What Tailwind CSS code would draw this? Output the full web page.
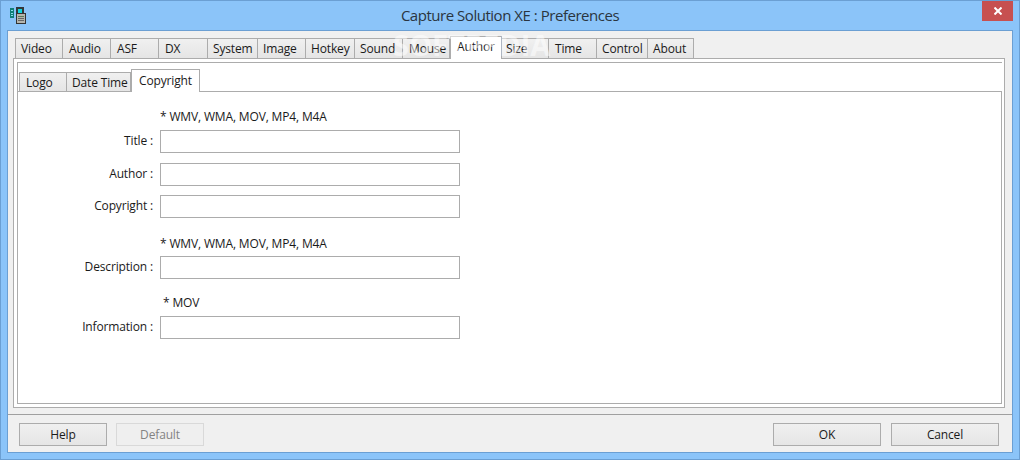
<!DOCTYPE html>
<html><head><meta charset="utf-8"><script src="https://cdn.jsdelivr.net/npm/@tailwindcss/browser@4"></script></head>
<body class="m-0 overflow-hidden">
<div class="w-[1020px] h-[460px] bg-[#8bc4f9] border border-[#6b9fd3] flex flex-col font-['Open_Sans',sans-serif] text-[12px] tracking-[-0.15px] text-[#1a1a1a] leading-none relative overflow-hidden">
  <div class="h-[29px] shrink-0 relative flex items-center justify-center pb-[1px]">
    <svg class="absolute left-[9px] top-[6px]" width="17" height="18" viewBox="0 0 17 18">
      <rect x="0" y="1" width="4" height="10" fill="#0f7f78"/><rect x="1" y="3" width="2" height="1" fill="#8de"/><rect x="1" y="6" width="2" height="1" fill="#8de"/><rect x="1" y="8" width="2" height="1" fill="#8de"/>
      <rect x="6" y="0" width="8" height="7" fill="#33393b"/><rect x="8" y="2" width="4" height="4" fill="#10d5e0"/>
      <rect x="6.5" y="6.5" width="9" height="10" fill="#b5b5ae" stroke="#333"/><rect x="8" y="9" width="6" height="1" fill="#5a7a5a"/><rect x="8" y="11" width="6" height="1" fill="#666"/><rect x="8" y="13" width="6" height="1" fill="#666"/>
    </svg>
    <span class="text-[15px] text-[#2a3540] tracking-[-0.47px]">Capture Solution XE : Preferences</span>
    <div class="absolute left-[981px] top-0 w-[31px] h-[20px] bg-[#c75050] flex items-center justify-center">
      <svg width="8" height="8" viewBox="0 0 8 8"><path d="M0.5 0.5L7.5 7.5M7.5 0.5L0.5 7.5" stroke="#fff" stroke-width="2" fill="none"/></svg>
    </div>
  </div>
  <div class="mx-[6px] h-[423px] shrink-0 border border-[#6b9fd3] bg-[#f0f0f0] flex flex-col relative">
    <div class="pl-[5px] pr-[7px] pt-[7px]">
      <div class="flex h-[20px] ml-[2px] relative z-10 items-end">
        <div class="w-[48px] h-[20px] border border-b-0 border-[#acacac] bg-gradient-to-b from-[#f0f0f0] to-[#e5e5e5] pl-[5px] pt-[4px]">Video</div>
        <div class="w-[48px] h-[20px] border border-b-0 border-l-0 border-[#acacac] bg-gradient-to-b from-[#f0f0f0] to-[#e5e5e5] pl-[6px] pt-[4px]">Audio</div>
        <div class="w-[48px] h-[20px] border border-b-0 border-l-0 border-[#acacac] bg-gradient-to-b from-[#f0f0f0] to-[#e5e5e5] pl-[6px] pt-[4px]">ASF</div>
        <div class="w-[49px] h-[20px] border border-b-0 border-l-0 border-[#acacac] bg-gradient-to-b from-[#f0f0f0] to-[#e5e5e5] pl-[6px] pt-[4px]">DX</div>
        <div class="w-[50px] h-[20px] border border-b-0 border-l-0 border-[#acacac] bg-gradient-to-b from-[#f0f0f0] to-[#e5e5e5] pl-[5px] pt-[4px]">System</div>
        <div class="w-[48px] h-[20px] border border-b-0 border-l-0 border-[#acacac] bg-gradient-to-b from-[#f0f0f0] to-[#e5e5e5] pl-[5px] pt-[4px]">Image</div>
        <div class="w-[49px] h-[20px] border border-b-0 border-l-0 border-[#acacac] bg-gradient-to-b from-[#f0f0f0] to-[#e5e5e5] pl-[5px] pt-[4px]">Hotkey</div>
        <div class="w-[48px] h-[20px] border border-b-0 border-l-0 border-[#acacac] bg-gradient-to-b from-[#f0f0f0] to-[#e5e5e5] pl-[5px] pt-[4px]">Sound</div>
        <div class="w-[47px] h-[20px] border border-b-0 border-l-0 border-[#acacac] bg-gradient-to-b from-[#f0f0f0] to-[#e5e5e5] pl-[6px] pt-[4px]">Mouse</div>
        <div class="w-[52px] h-[23px] border border-b-0 border-[#acacac] bg-white pl-[6px] pt-[4px] relative -mb-[1px]">Author</div>
        <div class="w-[47px] h-[20px] border border-b-0 border-l-0 border-[#acacac] bg-gradient-to-b from-[#f0f0f0] to-[#e5e5e5] pl-[4px] pt-[4px]">Size</div>
        <div class="w-[48px] h-[20px] border border-b-0 border-l-0 border-[#acacac] bg-gradient-to-b from-[#f0f0f0] to-[#e5e5e5] pl-[6px] pt-[4px]">Time</div>
        <div class="w-[51px] h-[20px] border border-b-0 border-l-0 border-[#acacac] bg-gradient-to-b from-[#f0f0f0] to-[#e5e5e5] pl-[5px] pt-[4px]">Control</div>
        <div class="w-[46px] h-[20px] border border-b-0 border-l-0 border-[#acacac] bg-gradient-to-b from-[#f0f0f0] to-[#e5e5e5] pl-[5px] pt-[4px]">About</div>
      </div>
      <div class="h-[350px] border border-[#acacac] bg-white pl-[3px] pr-[2px] pt-[3px]">
        <div class="h-[342px] border-t border-l border-[#acacac] flex flex-col">
          <div class="flex h-[28px] shrink-0 items-end pl-[1px] relative z-10">
            <div class="w-[48px] h-[19px] border border-b-0 border-[#acacac] bg-gradient-to-b from-[#f0f0f0] to-[#e5e5e5] pl-[6px] pt-[4px]">Logo</div>
            <div class="w-[64px] h-[19px] border border-b-0 border-l-0 border-[#acacac] bg-gradient-to-b from-[#f0f0f0] to-[#e5e5e5] pl-[5px] pt-[4px]">Date Time</div>
            <div class="w-[69px] h-[23px] border border-b-0 border-[#acacac] bg-white pl-[7px] pt-[5px] -mb-[1px]">Copyright</div>
          </div>
          <div class="h-[313px] border border-[#acacac] bg-white -ml-[1px] pt-[19px] flex flex-col">
            <div class="h-[14px] mb-[5px] ml-[142px]">* WMV, WMA, MOV, MP4, M4A</div>
            <div class="flex items-center gap-[7px] mb-[10px]"><span class="w-[135px] text-right pb-[1px]">Title :</span><div class="w-[300px] h-[23px] border border-[#acacac] bg-white"></div></div>
            <div class="flex items-center gap-[7px] mb-[9px]"><span class="w-[135px] text-right pb-[1px]">Author :</span><div class="w-[300px] h-[23px] border border-[#acacac] bg-white"></div></div>
            <div class="flex items-center gap-[7px]"><span class="w-[135px] text-right pb-[1px]">Copyright :</span><div class="w-[300px] h-[23px] border border-[#acacac] bg-white"></div></div>
            <div class="h-[14px] mt-[20px] mb-[4px] ml-[142px]">* WMV, WMA, MOV, MP4, M4A</div>
            <div class="flex items-center gap-[7px]"><span class="w-[135px] text-right pb-[1px]">Description :</span><div class="w-[300px] h-[23px] border border-[#acacac] bg-white"></div></div>
            <div class="h-[14px] mt-[18px] mb-[5px] ml-[145px]">* MOV</div>
            <div class="flex items-center gap-[7px]"><span class="w-[135px] text-right pb-[1px]">Information :</span><div class="w-[300px] h-[23px] border border-[#acacac] bg-white"></div></div>
          </div>
        </div>
      </div>
    </div>
    <div class="mt-[6px] border-t border-[#a0a0a0] pt-[8px] pl-[11px] pr-[13px] flex">
      <div class="w-[88px] h-[23px] border border-[#acacac] bg-gradient-to-b from-[#f0f0f0] to-[#e5e5e5] flex items-center justify-center">Help</div>
      <div class="w-[88px] h-[23px] ml-[9px] border border-[#d9d9d9] bg-[#efefef] text-[#838383] flex items-center justify-center">Default</div>
      <div class="w-[108px] h-[23px] ml-auto border border-[#acacac] bg-gradient-to-b from-[#f0f0f0] to-[#e5e5e5] flex items-center justify-center">OK</div>
      <div class="w-[108px] h-[23px] ml-[10px] border border-[#acacac] bg-gradient-to-b from-[#f0f0f0] to-[#e5e5e5] flex items-center justify-center">Cancel</div>
    </div>
  </div>
  <div class="absolute left-[392px] top-[29px] z-20 text-[29px] font-bold tracking-[0px] text-white/50 leading-[29px]">SOFTPEDIA</div>
</div>
</body></html>
